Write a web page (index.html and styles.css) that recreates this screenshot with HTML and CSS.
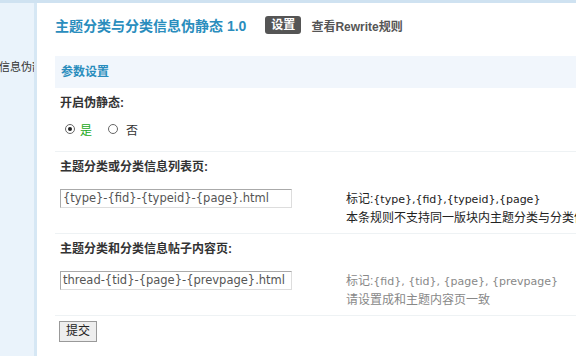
FILE: index.html
```html
<!DOCTYPE html>
<html>
<head>
<meta charset="utf-8">
<link rel="stylesheet" href="styles.css">
</head>
<body>
<div class="page">
  <aside class="side">
    <div class="side-item">信息伪静</div>
  </aside>
  <main class="main">
    <div class="head">
      <h1 class="title">主题分类与分类信息伪静态 1.0</h1>
      <span class="tab-on">设置</span>
      <span class="tab">查看Rewrite规则</span>
    </div>
    <div class="section-title">参数设置</div>
    <div class="row">
      <div class="label">开启伪静态:</div>
      <div class="radios">
        <span class="radio on"></span><span class="yes">是</span>
        <span class="radio"></span><span class="no">否</span>
      </div>
    </div>
    <div class="row">
      <div class="label">主题分类或分类信息列表页:</div>
      <div class="field">
        <div class="input">{type}-{fid}-{typeid}-{page}.html</div>
        <div class="tip">
          <div>标记:<span class="lt">{type},{fid},{typeid},{page}</span></div>
          <div>本条规则不支持同一版块内主题分类与分类信息同时使用</div>
        </div>
      </div>
    </div>
    <div class="row">
      <div class="label">主题分类和分类信息帖子内容页:</div>
      <div class="field">
        <div class="input">thread-{tid}-{page}-{prevpage}.html</div>
        <div class="tip light">
          <div>标记:<span class="lt">{fid}, {tid}, {page}, {prevpage}</span></div>
          <div>请设置成和主题内容页一致</div>
        </div>
      </div>
    </div>
    <div class="submit-row">
      <span class="btn">提交</span>
    </div>
  </main>
</div>
</body>
</html>
```
FILE: styles.css
```css
html, body {
  margin: 0;
  padding: 0;
  background: #fff;
  font-family: "Liberation Sans", "Noto Sans CJK SC", sans-serif;
  font-size: 12px;
  color: #333;
  overflow: hidden;
}
.page {
  display: flex;
  height: 356px;
  border-top: 3px solid #cfe2f1;
  box-sizing: border-box;
  width: 576px;
}
.side {
  width: 34px;
  flex: none;
  background: #eaf3fb;
  border-right: 3px solid #d6e7f4;
  overflow: hidden;
  position: relative;
}
.side-item {
  position: absolute;
  left: -1px;
  top: 55px;
  white-space: nowrap;
  font-size: 11px;
  color: #333;
}
.main {
  flex: 1;
  padding-left: 18px;
  overflow: hidden;
}
.head {
  display: flex;
  align-items: center;
  height: 40px;
  margin-top: 2px;
}
.title {
  margin: 0;
  font-size: 14px;
  font-weight: bold;
  color: #2a8dbd;
  white-space: nowrap;
}
.tab-on {
  margin-left: 19px;
  background: #555;
  color: #fff;
  font-weight: bold;
  padding: 2px 6px;
  border-radius: 3px;
  line-height: 14px;
}
.tab {
  margin-left: 10px;
  font-weight: bold;
  color: #555;
  white-space: nowrap;
}
.section-title {
  margin-top: 11px;
  height: 32px;
  line-height: 32px;
  background: #f1f6fc;
  padding-left: 6px;
  color: #2a8dbd;
  font-weight: bold;
}
.row {
  padding-left: 5px;
  border-bottom: 1px solid #eef2f4;
  padding-top: 5px;
}
.label {
  font-weight: bold;
  color: #333;
  height: 20px;
  line-height: 20px;
}
.radios {
  display: flex;
  align-items: center;
  height: 32px;
  padding-left: 5px;
  padding-bottom: 6px;
}
.radio {
  width: 10px;
  height: 10px;
  border: 1px solid #666;
  border-radius: 50%;
  box-sizing: border-box;
  position: relative;
  background: #fff;
}
.radio.on::after {
  content: "";
  position: absolute;
  left: 2px;
  top: 2px;
  width: 4px;
  height: 4px;
  border-radius: 50%;
  background: #222;
}
.yes {
  color: #22a822;
  margin-left: 5px;
  margin-right: 16px;
}
.no {
  margin-left: 8px;
  color: #333;
}
.field {
  display: flex;
  align-items: flex-start;
  margin-top: 12px;
  height: 44px;
}
.input {
  width: 232px;
  height: 19px;
  box-sizing: border-box;
  border: 1px solid #aaa;
  border-right-color: #ddd;
  border-bottom-color: #ddd;
  line-height: 17px;
  padding-left: 2px;
  color: #555;
  font-family: "DejaVu Sans", sans-serif;
  font-size: 11.5px;
  white-space: nowrap;
  overflow: hidden;
  flex: none;
}
.tip {
  margin-left: 54px;
  margin-top: 1px;
  line-height: 18px;
  color: #222;
  white-space: nowrap;
}
.lt {
  font-family: "DejaVu Sans", sans-serif;
  font-size: 11px;
}
.tip.light {
  color: #888;
}
.submit-row {
  padding: 5px 0 0 4px;
}
.btn {
  display: inline-block;
  width: 38px;
  height: 21px;
  box-sizing: border-box;
  line-height: 19px;
  text-align: center;
  border: 1px solid #999;
  background: #eee;
  color: #222;
}
```
